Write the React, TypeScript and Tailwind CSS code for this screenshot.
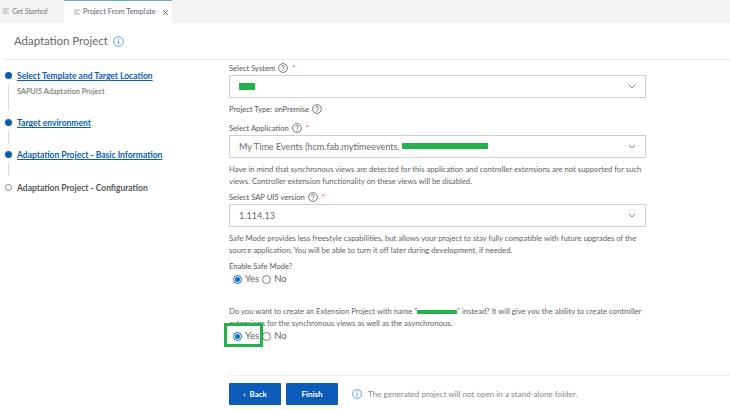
import React from "react";

const font = { fontFamily: 'Lato,"Noto Sans",sans-serif' };

function Q() {
  return (
    <svg width="10" height="10" viewBox="0 0 10 10" className="shrink-0">
      <circle cx="5" cy="5" r="4.4" fill="none" stroke="#555" strokeWidth="0.8" />
      <path d="M3.6 4c0-1 .7-1.5 1.4-1.5S6.4 3 6.4 3.8C6.4 4.8 5 4.8 5 6" fill="none" stroke="#555" strokeWidth="0.8" />
      <circle cx="5" cy="7.3" r="0.5" fill="#555" />
    </svg>
  );
}

function Info({ size = 10 }: { size?: number }) {
  return (
    <svg width={size} height={size} viewBox="0 0 10 10" className="shrink-0">
      <circle cx="5" cy="5" r="4.4" fill="none" stroke="#3f8fdc" strokeWidth="0.8" />
      <rect x="4.6" y="4.3" width="0.9" height="3.2" fill="#3f8fdc" />
      <rect x="4.6" y="2.5" width="0.9" height="1" fill="#3f8fdc" />
    </svg>
  );
}

function Chevron() {
  return (
    <svg width="8" height="5" viewBox="0 0 8 5" className="shrink-0">
      <path d="M1 1l3 3 3-3" fill="none" stroke="#777" strokeWidth="0.9" />
    </svg>
  );
}

function Lines() {
  return (
    <svg width="6" height="7" viewBox="0 0 6 7" className="shrink-0">
      <path d="M0 1h6M0 3h4M0 5h6" stroke="#aaa" strokeWidth="0.9" />
    </svg>
  );
}

function Close() {
  return (
    <svg width="7" height="7" viewBox="0 0 7 7" className="ml-[3px] shrink-0">
      <path d="M1 1l5 5M6 1L1 6" stroke="#666" strokeWidth="0.8" />
    </svg>
  );
}

function Label({ text, help = true, req = true, className = "" }: { text: string; help?: boolean; req?: boolean; className?: string }) {
  return (
    <div className={"flex h-[12px] items-center gap-[3px] whitespace-nowrap text-[7.6px] leading-[12px] text-[#555] " + className}>
      <span>{text}</span>
      {help && <Q />}
      {req && <span className="ml-[1px] text-[#e2574c]">*</span>}
    </div>
  );
}

function Select({ children }: { children: React.ReactNode }) {
  return (
    <div className="flex h-[23px] w-[417px] items-center justify-between border border-[#cfcfcf] px-[9px] text-[9.1px] text-[#6a6a6a]">
      <div className="flex items-center whitespace-nowrap">{children}</div>
      <Chevron />
    </div>
  );
}

function Radio({ on, label }: { on?: boolean; label: string }) {
  return (
    <div className="flex h-[14px] items-center gap-[3px] text-[9.6px] text-[#666]">
      <span className={"flex h-[9px] w-[9px] items-center justify-center rounded-full border " + (on ? "border-[#0a6ed1]" : "border-[#777]")}>
        {on && <span className="h-[5px] w-[5px] rounded-full bg-[#0a6ed1]" />}
      </span>
      <span>{label}</span>
    </div>
  );
}

function Step({ label, active = true, line, height, children }: { label: string; active?: boolean; line: number; height: number; children?: React.ReactNode }) {
  return (
    <div className="flex gap-[4px]" style={{ height }}>
      <div className="flex w-[9px] flex-col items-center">
        {active ? (
          <span className="mt-[2px] h-[7px] w-[7px] rounded-full bg-[#0a5cb8]" />
        ) : (
          <span className="mt-[2px] h-[7px] w-[7px] rounded-full border border-[#888] bg-white" />
        )}
        {line > 0 && <span className="mt-[5px] w-px bg-[#d9d9d9]" style={{ height: line }} />}
      </div>
      <div className="whitespace-nowrap text-[8.5px] font-bold leading-[12px]">
        <div className={active ? "text-[#0a5cb8] underline" : "text-[#555]"}>{label}</div>
        {children}
      </div>
    </div>
  );
}

const para = "whitespace-nowrap text-[7.7px] leading-[12px] text-[#5f5f5f]";

export default function App() {
  return (
    <div className="flex h-[410px] w-[730px] flex-col overflow-hidden bg-white" style={font}>
      <div className="flex h-[23px] shrink-0 bg-[#f3f3f3] text-[7.4px] text-[#777]">
        <div className="flex w-[64px] items-center gap-[3px] whitespace-nowrap pl-[3px] italic">
          <Lines />
          <span>Get Started</span>
        </div>
        <div className="flex w-[108px] items-center gap-[3px] whitespace-nowrap border-t border-t-[#6ba6d9] bg-white pl-[10px] text-[#666]">
          <Lines />
          <span>Project From Template</span>
          <Close />
        </div>
      </div>

      <div className="ml-[4px] flex h-[37px] shrink-0 items-center gap-[5px] border-b border-[#e8e8e8] pl-[10px] text-[11.4px] text-[#666]">
        <span>Adaptation Project</span>
        <Info size={11} />
      </div>

      <div className="flex min-h-0 flex-1">
        <div className="w-[229px] shrink-0 pl-[4px] pt-[10px]">
          <Step label="Select Template and Target Location" line={26} height={47}>
            <div className="mt-[4px] text-[7.4px] font-normal leading-[12px] text-[#666]">SAPUI5 Adaptation Project</div>
          </Step>
          <Step label="Target environment" line={12} height={32} />
          <Step label="Adaptation Project - Basic Information" line={12} height={33} />
          <Step label="Adaptation Project - Configuration" active={false} line={0} height={12} />
        </div>

        <div className="flex min-w-0 flex-1 flex-col">
          <div className="relative flex-1 pt-[2px]">
            <Label text="Select System" />
            <div className="mt-[1px]">
              <Select>
                <span className="h-[7px] w-[16px] bg-[#22b14c]" />
              </Select>
            </div>
            <Label text="Project Type: onPremise" req={false} className="mt-[5px]" />
            <Label text="Select Application" className="mt-[7px]" />
            <div className="mt-[1px]">
              <Select>
                <span>My Time Events (hcm.fab.mytimeevents,&nbsp;</span>
                <span className="h-[6px] w-[86px] bg-[#22b14c]" />
              </Select>
            </div>
            <div className={"mt-[5px] " + para}>
              Have in mind that synchronous views are detected for this application and controller extensions are not supported for such
              <br />
              views. Controller extension functionality on these views will be disabled.
            </div>
            <Label text="Select SAP UI5 version" className="mt-[4px]" />
            <div className="mt-[1px]">
              <Select>1.114.13</Select>
            </div>
            <div className={"mt-[5px] " + para}>
              Safe Mode provides less freestyle capabilities, but allows your project to stay fully compatible with future upgrades of the
              <br />
              source application. You will be able to turn it off later during development, if needed.
            </div>
            <Label text="Enable Safe Mode?" help={false} req={false} className="mt-[4px]" />
            <div className="ml-[4px] flex gap-[3px]">
              <Radio on label="Yes" />
              <Radio label="No" />
            </div>
            <div className={"mt-[19px] " + para}>
              Do you want to create an Extension Project with name "<span className="inline-block h-[4px] w-[40px] bg-[#22b14c] align-middle" />" instead? It will give you the ability to create controller
              <br />
              extensions for the synchronous views as well as the asynchronous.
            </div>
            <div className="ml-[4px] flex gap-[3px]">
              <Radio on label="Yes" />
              <Radio label="No" />
            </div>
            <div className="absolute left-[-5px] top-[263px] h-[24px] w-[39px] border-[3px] border-[#22b14c]" />
          </div>
          <div className="flex h-[35px] shrink-0 items-start gap-[5px] border-t border-[#eeeeee] pt-[7px]">
            <button className="flex h-[22px] w-[52px] items-center justify-center gap-[4px] rounded-[1px] bg-[#0a5cb8] text-[8px] font-bold text-white">
              <span>‹</span>
              <span>Back</span>
            </button>
            <button className="h-[22px] w-[52px] rounded-[1px] bg-[#0a5cb8] text-[8px] font-bold text-white">Finish</button>
            <div className="ml-[9px] flex h-[22px] items-center gap-[6px] whitespace-nowrap text-[8.1px] text-[#888]">
              <Info />
              <span>The generated project will not open in a stand-alone folder.</span>
            </div>
          </div>
        </div>
      </div>
    </div>
  );
}
